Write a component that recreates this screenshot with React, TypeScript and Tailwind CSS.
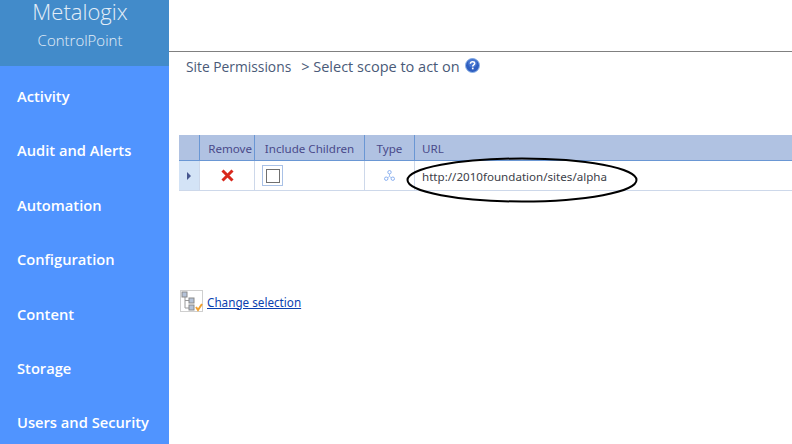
const menuItems = [
  "Activity",
  "Audit and Alerts",
  "Automation",
  "Configuration",
  "Content",
  "Storage",
  "Users and Security",
];

function HelpIcon() {
  return (
    <svg width="15" height="15" viewBox="0 0 15 15" className="ml-[5px] mt-[-4px]">
      <circle cx="7.5" cy="7.5" r="7" fill="#2f5fc0" stroke="#8fb4e8" strokeWidth="1" />
      <circle cx="7.5" cy="5" r="4.5" fill="#5c8ce0" opacity="0.5" />
      <path d="M5.4 5.8C5.5 4.4 6.4 3.8 7.6 3.8C8.9 3.8 9.7 4.5 9.7 5.5C9.7 6.9 7.7 6.9 7.7 8.5" fill="none" stroke="#fff" strokeWidth="1.5" />
      <rect x="6.9" y="9.6" width="1.7" height="1.7" fill="#fff" />
    </svg>
  );
}

function TreeIcon() {
  return (
    <svg width="24" height="23" viewBox="0 0 24 23" className="shrink-0">
      <rect x="0.5" y="0.5" width="22" height="21" fill="#fff" stroke="#cfcfcf" />
      <path d="M5 6V18H9M5 10.5H9" fill="none" stroke="#9a9a9a" strokeWidth="1" />
      <rect x="2" y="2" width="5" height="5" fill="#b4c2d8" stroke="#8a8a8a" />
      <rect x="9" y="8" width="5" height="5" fill="#b4c2d8" stroke="#8a8a8a" />
      <rect x="9" y="15" width="5" height="5" fill="#b4c2d8" stroke="#8a8a8a" />
      <path d="M16 17L18 20L22 14" fill="none" stroke="#f0a030" strokeWidth="2" />
    </svg>
  );
}

export default function App() {
  return (
    <div className="flex w-[792px] h-[444px] overflow-hidden bg-white font-['Open_Sans',sans-serif]">
      <div className="w-[169px] shrink-0 flex flex-col bg-[#5094ff]">
        <div className="h-[66px] shrink-0 bg-[#428bca] flex flex-col items-center pr-[9px] text-[#e4eef8]">
          <div className="text-[22px] leading-[22px] font-light">Metalogix</div>
          <div className="text-[15px] leading-[20px] mt-[8px] font-light">ControlPoint</div>
        </div>
        <div className="pt-[2.8px] flex flex-col">
          {menuItems.map((item) => (
            <div
              key={item}
              className="h-[54.4px] shrink-0 flex items-center pl-[17px] text-[14.7px] font-semibold text-white"
            >
              {item}
            </div>
          ))}
        </div>
      </div>

      <div className="flex-1 min-w-0 pt-[51px]">
        <div className="h-px bg-[#808080]" />
        <div className="flex items-center h-[30px] pl-[17px] text-[#4a5a78]">
          <span className="text-[13.8px]">Site Permissions</span>
          <span className="ml-[10px] text-[14.5px]">&gt; Select scope to act on</span>
          <HelpIcon />
        </div>

        <div className="relative ml-[10px] mt-[53px] text-[11.6px] text-[#4a4a8a] font-['Noto_Sans',sans-serif]">
          <div className="flex h-[26px] bg-[#b0c2e2] border-b border-[#6a97d4]">
            <div className="w-[21px] border-r border-[#6a97d4]" />
            <div className="w-[55px] border-r border-[#6a97d4] flex items-center justify-end pr-[2px] pt-[2px]">Remove</div>
            <div className="w-[110px] border-r border-[#6a97d4] flex items-center justify-center pt-[2px]">Include Children</div>
            <div className="w-[50px] border-r border-[#6a97d4] flex items-center justify-center pt-[2px]">Type</div>
            <div className="flex-1 flex items-center pl-[7px] pt-[2px]">URL</div>
          </div>
          <div className="flex h-[30px] border-b border-[#cdd8ea]">
            <div className="w-[21px] bg-[#d3e3f6] border-r border-[#cdd8ea] flex items-center justify-center">
              <div className="w-0 h-0 border-y-[4px] border-y-transparent border-l-[4px] border-l-[#47578f]" />
            </div>
            <div className="w-[55px] border-r border-[#cdd8ea] flex items-center justify-center">
              <svg width="13" height="13" viewBox="0 0 13 13">
                <path d="M1.5 1.5L11.5 11.5M11.5 1.5L1.5 11.5" stroke="#d8281c" strokeWidth="3" />
              </svg>
            </div>
            <div className="w-[110px] border-r border-[#cdd8ea] flex items-center pl-[7px]">
              <div className="w-[21px] h-[21px] border border-[#a9c1e6] flex items-center justify-center">
                <div className="w-[14px] h-[14px] border border-[#707070] bg-white" />
              </div>
            </div>
            <div className="w-[50px] border-r border-[#cdd8ea] flex items-center justify-center">
              <svg width="11" height="11" viewBox="0 0 11 11">
                <path d="M5.5 3.5V6.5M5.5 6.5L2.5 8.5M5.5 6.5L8.5 8.5" fill="none" stroke="#a8c4f2" strokeWidth="1" />
                <circle cx="5.5" cy="2.2" r="1.7" fill="#fff" stroke="#8ab0f0" />
                <circle cx="2.2" cy="8.7" r="1.7" fill="#fff" stroke="#8ab0f0" />
                <circle cx="8.8" cy="8.7" r="1.7" fill="#fff" stroke="#8ab0f0" />
              </svg>
            </div>
            <div className="flex-1 flex items-center pl-[7px] pt-[2px] text-[#3c4048]">http://2010foundation/sites/alpha</div>
          </div>
          <svg width="232" height="46" viewBox="0 0 232 46" className="absolute left-[227px] top-[22px] pointer-events-none">
            <ellipse cx="116" cy="23" rx="114.5" ry="21.5" fill="none" stroke="#000" strokeWidth="2" />
          </svg>
        </div>

        <div className="flex items-center ml-[11px] mt-[99px] gap-[3px]">
          <TreeIcon />
          <a href="#" className="text-[11.7px] pt-[2px] text-[#0b3fb0] underline font-['Noto_Sans',sans-serif]">Change selection</a>
        </div>
      </div>
    </div>
  );
}
